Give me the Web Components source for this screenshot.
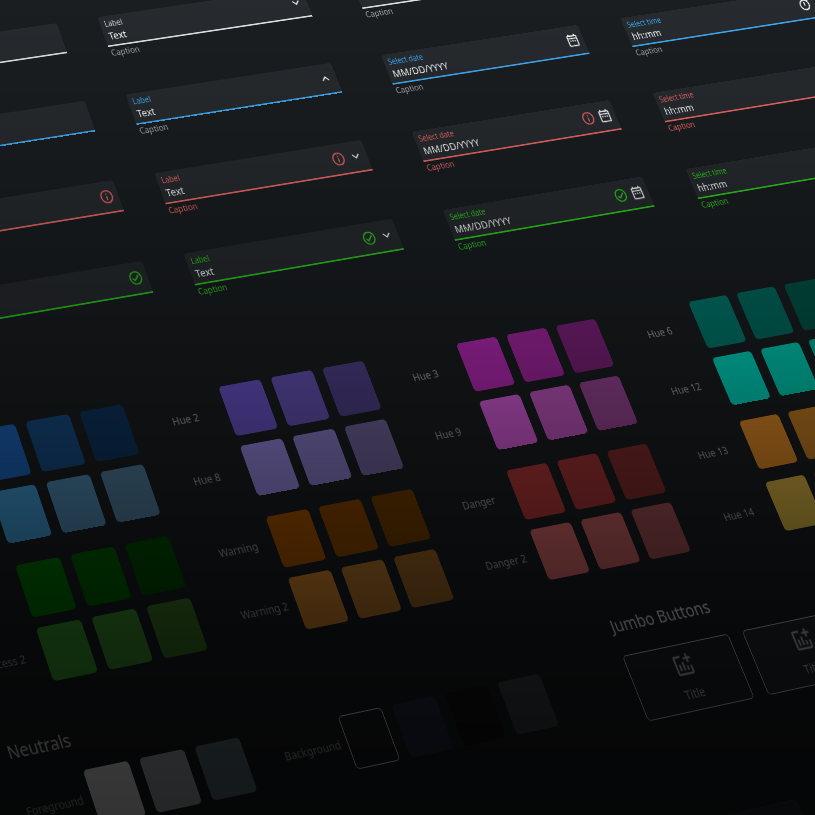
<!DOCTYPE html>
<html lang="en">
<head>
<meta charset="utf-8">
<meta name="viewport" content="width=device-width, initial-scale=1">
<title>UI Kit</title>
<style>
    body {
        margin: 0;
        background: #1b1f22;
        font-family: "Noto Sans", "Open Sans", sans-serif;
    }
</style>
</head>
<body>
<kit-stage>
    <kit-fields>
        <form-field kind="text" status="normal" name="Text field"></form-field>
        <form-field kind="select" status="normal" label="Label" value="Text" caption="Caption"></form-field>
        <form-field kind="date" status="normal" name="Select date" caption="Caption"></form-field>
        <form-field kind="time" status="normal" name="Select time"></form-field>

        <form-field kind="text" status="focus" name="Text field"></form-field>
        <form-field kind="select" status="focus" label="Label" value="Text" caption="Caption"></form-field>
        <form-field kind="date" status="focus" label="Select date" value="MM/DD/YYYY" caption="Caption"></form-field>
        <form-field kind="time" status="focus" label="Select time" value="hh:mm" caption="Caption"></form-field>

        <form-field kind="text" status="error" name="Text field"></form-field>
        <form-field kind="select" status="error" label="Label" value="Text" caption="Caption"></form-field>
        <form-field kind="date" status="error" label="Select date" value="MM/DD/YYYY" caption="Caption"></form-field>
        <form-field kind="time" status="error" label="Select time" value="hh:mm" caption="Caption"></form-field>

        <form-field kind="text" status="success" name="Text field"></form-field>
        <form-field kind="select" status="success" label="Label" value="Text" caption="Caption"></form-field>
        <form-field kind="date" status="success" label="Select date" value="MM/DD/YYYY" caption="Caption"></form-field>
        <form-field kind="time" status="success" label="Select time" value="hh:mm" caption="Caption"></form-field>
    </kit-fields>

    <kit-palette>
        <hue-group wide>
            <hue-row colors="#1e68c0 #184f88 #0f3862"></hue-row>
            <hue-row colors="#43a0dc #528fb8 #5483a4"></hue-row>
            <hue-row slot="second" colors="#007800 #006600 #005000"></hue-row>
            <hue-row slot="second" colors="#3ca632 #409a30 #3e7c26">Success 2</hue-row>
        </hue-group>
        <hue-group>
            <hue-row colors="#6f56cf #6956ba #52448f">Hue 2</hue-row>
            <hue-row colors="#9b8de9 #8f83d4 #766aa3">Hue 8</hue-row>
            <hue-row slot="second" colors="#af5800 #914b00 #784100">Warning</hue-row>
            <hue-row slot="second" colors="#dc8b2e #bf7c2e #a2682a">Warning 2</hue-row>
        </hue-group>
        <hue-group>
            <hue-row colors="#bb2bbb #a828a6 #80237f">Hue 3</hue-row>
            <hue-row colors="#de60e2 #c859c8 #9d4898">Hue 9</hue-row>
            <hue-row slot="second" colors="#bb3b3b #aa3638 #872e2e">Danger</hue-row>
            <hue-row slot="second" colors="#df6c6e #cd6466 #a45254">Danger 2</hue-row>
        </hue-group>
        <hue-group loose>
            <hue-row colors="#007b6f #006d62 #005648">Hue 6</hue-row>
            <hue-row colors="#00dcc4 #00d2ba #00b8a4">Hue 12</hue-row>
            <hue-row slot="second" colors="#e68e28 #c88026 #a86c20">Hue 13</hue-row>
            <hue-row slot="second" colors="#dfba44 #c4a43c #a08632">Hue 14</hue-row>
        </hue-group>
    </kit-palette>

    <kit-footer>
        <kit-section heading="Neutrals">
            <hue-row wide colors="#ffffff #b7bcc4 #627885">Foreground</hue-row>
            <hue-row wide colors="outline #262e43 #151515 #3f4349">Background</hue-row>
        </kit-section>
        <kit-section heading="Jumbo Buttons" buttons>
            <jumbo-button>Title</jumbo-button>
            <jumbo-button hovered>Title</jumbo-button>
            <jumbo-button disabled></jumbo-button>
        </kit-section>
    </kit-footer>
</kit-stage>

<script>
const icons = {
    down: 'M16.59 8.59 12 13.17 7.41 8.59 6 10l6 6 6-6z',
    up: 'M12 8l-6 6 1.41 1.41L12 10.83l4.59 4.58L18 14z',
    info: 'M11 7h2v2h-2zm0 4h2v6h-2zm1-9C6.48 2 2 6.48 2 12s4.48 10 10 10 10-4.48 10-10S17.52 2 12 2zm0 18c-4.41 0-8-3.59-8-8s3.59-8 8-8 8 3.59 8 8-3.59 8-8 8z',
    check: 'M12 2C6.48 2 2 6.48 2 12s4.48 10 10 10 10-4.48 10-10S17.52 2 12 2zm0 18c-4.41 0-8-3.59-8-8s3.59-8 8-8 8 3.59 8 8-3.59 8-8 8zm4.59-12.42L10 14.17l-2.59-2.58L6 13l4 4 8-8z',
    date: 'M19 4h-1V2h-2v2H8V2H6v2H5c-1.1 0-2 .9-2 2v14c0 1.1.9 2 2 2h14c1.1 0 2-.9 2-2V6c0-1.1-.9-2-2-2zm0 16H5V10h14v10zM5 8V6h14v2H5zm2 4h2v2H7zm4 0h2v2h-2zm4 0h2v2h-2z',
    time: 'M15 1H9v2h6V1zm-4 13h2V8h-2v6zm8.03-6.61 1.42-1.42c-.43-.51-.9-.99-1.41-1.41l-1.42 1.42C16.07 4.74 14.12 4 12 4c-4.97 0-9 4.03-9 9s4.02 9 9 9 9-4.03 9-9c0-2.12-.74-4.07-1.97-5.61zM12 20c-3.87 0-7-3.13-7-7s3.13-7 7-7 7 3.13 7 7-3.13 7-7 7z',
    chart: 'M22 5v2h-3v3h-2V7h-3V5h3V2h2v3h3zm-3 14H5V5h6V3H5c-1.1 0-2 .9-2 2v14c0 1.1.9 2 2 2h14c1.1 0 2-.9 2-2v-6h-2v6zm-4-6v4h2v-4h-2zm-4 4h2V9h-2v8zm-2 0v-6H7v6h2z'
};

const icon = (name, cls = '') =>
    `<svg class="${cls}" viewBox="0 0 24 24" aria-hidden="true"><path fill="currentColor" d="${icons[name]}"/></svg>`;

// Holds the tilted board and the fade to black over it
class KitStage extends HTMLElement {
    constructor() {
        super();
        this.attachShadow({ mode: 'open' });
        this.shadowRoot.innerHTML = `
<style>
    :host {
        display: block;
        position: relative;
        height: 100vh;
        overflow: hidden;
    }
    .board {
        width: max-content;
        padding-top: 8px;
        transform-origin: 0 0;
        transform: matrix3d(
            0.7409, -0.1069, 0, 0.0000636,
            0.2741, 0.7774, 0, -0.0001,
            0, 0, 1, 0,
            -221.6, 58.2, 0, 1.02154);
    }
    .fade {
        position: absolute;
        inset: 0;
        pointer-events: none;
        background: linear-gradient(rgba(0, 0, 0, .02) 0%, rgba(0, 0, 0, .12) 15%, rgba(0, 0, 0, .35) 40%,
            rgba(0, 0, 0, .5) 55%, rgba(0, 0, 0, .72) 78%, rgba(0, 0, 0, .78) 92%, rgba(0, 0, 0, .8) 100%);
    }
</style>
<div class="board"><slot></slot></div>
<div class="fade"></div>`;
    }
}
customElements.define('kit-stage', KitStage);

class KitFields extends HTMLElement {
    constructor() {
        super();
        this.attachShadow({ mode: 'open' });
        this.shadowRoot.innerHTML = `
<style>
    :host {
        display: grid;
        grid-template-columns: 354px 370px 362px 296px;
        row-gap: 47px;
        padding-left: 80px;
    }
</style>
<slot></slot>`;
    }
}
customElements.define('kit-fields', KitFields);

class FormField extends HTMLElement {
    constructor() {
        super();
        this.attachShadow({ mode: 'open' });
    }

    connectedCallback() {
        const kind = this.getAttribute('kind');
        const status = this.getAttribute('status');
        const label = this.getAttribute('label') || '';
        const value = this.getAttribute('value') || '';
        const name = label ? '' : `aria-label="${this.getAttribute('name')}"`;

        const control = kind === 'select'
            ? `<select id="control" ${name}><option>${value}</option></select>`
            : `<input id="control" type="text" value="${value}" ${name}>`;

        let marks = '';
        if (status === 'error') marks += icon('info', 'mark');
        if (status === 'success') marks += icon('check', 'mark');
        if (kind === 'select') marks += icon(status === 'focus' ? 'up' : 'down');
        if (kind === 'date' || kind === 'time') marks += icon(kind);

        this.shadowRoot.innerHTML = `
<style>
    :host {
        --line: #e6e6ea;
        --label: #d4d6d8;
        --caption: #a8abae;
        display: block;
        width: 296px;
        height: 56px;
    }
    :host([status="focus"]) { --line: #40adf8; --label: #40adf8; }
    :host([status="error"]) { --line: #f06a68; --label: #f06a68; --caption: #f06a68; }
    :host([status="success"]) { --line: #2ed01f; --label: #2ed01f; --caption: #2ed01f; }
    .box {
        display: flex;
        align-items: center;
        gap: 5px;
        box-sizing: border-box;
        height: 40px;
        padding: 0 6px;
        background: #282c30;
        border-bottom: 2px solid var(--line);
        border-radius: 4px 4px 0 0;
    }
    .texts {
        flex: 1;
        display: flex;
        flex-direction: column;
    }
    label {
        font-size: 10px;
        line-height: 14px;
        color: var(--label);
    }
    input, select {
        appearance: none;
        width: 100%;
        height: 18px;
        margin: 0;
        padding: 0;
        border: 0;
        background: none;
        font: 13px/18px "Noto Sans", "Open Sans", sans-serif;
        color: #fff;
        outline: none;
    }
    svg {
        width: 20px;
        height: 20px;
        color: #fff;
    }
    .mark { color: var(--line); }
    .caption {
        padding-left: 1px;
        font-size: 11px;
        line-height: 16px;
        color: var(--caption);
    }
</style>
<div class="box">
    <div class="texts">
        ${label ? `<label for="control">${label}</label>` : ''}
        ${control}
    </div>
    ${marks}
</div>
<div class="caption">${this.getAttribute('caption') || ''}</div>`;
    }
}
customElements.define('form-field', FormField);

class KitPalette extends HTMLElement {
    constructor() {
        super();
        this.attachShadow({ mode: 'open' });
        this.shadowRoot.innerHTML = `
<style>
    :host {
        display: grid;
        grid-template-columns: 341px 334px 340px 279px;
        margin-top: 107px;
    }
</style>
<slot></slot>`;
    }
}
customElements.define('kit-palette', KitPalette);

class HueGroup extends HTMLElement {
    constructor() {
        super();
        this.attachShadow({ mode: 'open' });
        this.shadowRoot.innerHTML = `
<style>
    :host {
        --label-width: 75px;
        display: flex;
        flex-direction: column;
        gap: 25px;
    }
    :host([wide]) { --label-width: 83px; }
    :host([loose]) { gap: 20px; }
    :host([loose]) .second { gap: 16px; }
    div {
        display: flex;
        flex-direction: column;
        gap: 12px;
    }
</style>
<div><slot></slot></div>
<div class="second"><slot name="second"></slot></div>`;
    }
}
customElements.define('hue-group', HueGroup);

class HueRow extends HTMLElement {
    constructor() {
        super();
        this.attachShadow({ mode: 'open' });
    }

    connectedCallback() {
        const swatches = this.getAttribute('colors').split(' ').map(color =>
            color === 'outline'
                ? '<span class="swatch outline"></span>'
                : `<span class="swatch" style="background:${color}"></span>`
        ).join('');

        this.shadowRoot.innerHTML = `
<style>
    :host {
        display: flex;
        align-items: center;
        font-size: 13px;
        line-height: 18px;
        color: #a6a6a6;
    }
    :host([wide]) { --label-width: 83px; }
    .name {
        width: var(--label-width);
        white-space: nowrap;
    }
    .swatches {
        display: flex;
        gap: 14px;
    }
    .swatch {
        box-sizing: border-box;
        width: 58px;
        height: 60px;
        border-radius: 5px;
    }
    .outline { border: 1px solid #f0f0f0; }
</style>
<span class="name"><slot></slot></span>
<span class="swatches">${swatches}</span>`;
    }
}
customElements.define('hue-row', HueRow);

class KitFooter extends HTMLElement {
    constructor() {
        super();
        this.attachShadow({ mode: 'open' });
        this.shadowRoot.innerHTML = `
<style>
    :host {
        display: flex;
        gap: 116px;
        margin-top: 51px;
    }
</style>
<slot></slot>`;
    }
}
customElements.define('kit-footer', KitFooter);

class KitSection extends HTMLElement {
    constructor() {
        super();
        this.attachShadow({ mode: 'open' });
        this.shadowRoot.innerHTML = `
<style>
    :host { display: block; }
    h2 {
        margin: 0 0 20px;
        font-size: 20px;
        line-height: 28px;
        font-weight: 400;
        color: #f0f0f0;
    }
    .items {
        display: flex;
        align-items: flex-start;
        gap: 48px;
    }
    :host([buttons]) .items {
        display: grid;
        grid-template-columns: 150px 150px;
        gap: 116px 20px;
    }
</style>
<h2>${this.getAttribute('heading')}</h2>
<div class="items"><slot></slot></div>`;
    }
}
customElements.define('kit-section', KitSection);

class JumboButton extends HTMLElement {
    constructor() {
        super();
        this.attachShadow({ mode: 'open' });
        this.shadowRoot.innerHTML = `
<style>
    :host { display: block; }
    button {
        display: flex;
        flex-direction: column;
        align-items: center;
        gap: 8px;
        width: 100%;
        height: 76px;
        padding: 8px 0;
        border: 1px solid #d8d8d8;
        border-radius: 5px;
        background: #20262e;
        font: 14px/20px "Noto Sans", "Open Sans", sans-serif;
        color: #c4c4c4;
    }
    svg {
        width: 30px;
        height: 30px;
    }
    :host([hovered]) button { background: #272c30; }
    :host([disabled]) button {
        border-color: #353945;
        background: #2a2e3a;
    }
    :host([disabled]) svg { display: none; }
</style>
<button type="button"${this.hasAttribute('disabled') ? ' disabled' : ''}>${icon('chart')}<slot></slot></button>`;
    }
}
customElements.define('jumbo-button', JumboButton);
</script>
</body>
</html>
